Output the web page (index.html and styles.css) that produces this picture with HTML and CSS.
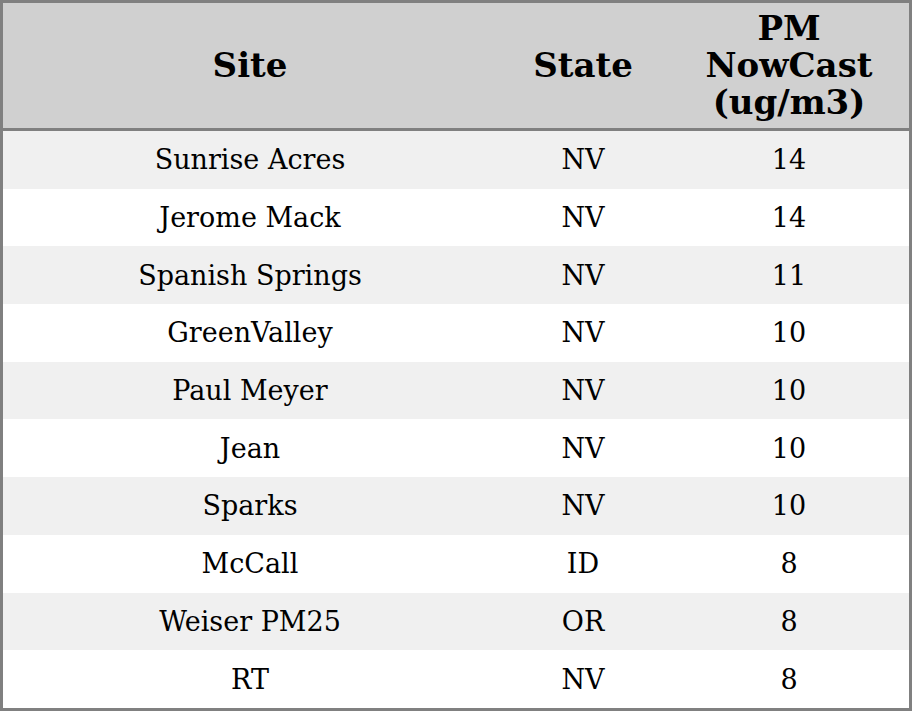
FILE: index.html
```html
<!DOCTYPE html>
<html>
<head>
<meta charset="utf-8">
<link rel="stylesheet" href="styles.css">
</head>
<body>
<table class="aq">
  <thead>
    <tr>
      <th class="c-site">Site</th>
      <th class="c-state">State</th>
      <th class="c-pm">PM<br>NowCast<br>(ug/m3)</th>
    </tr>
  </thead>
  <tbody>
    <tr><td>Sunrise Acres</td><td>NV</td><td>14</td></tr>
    <tr><td>Jerome Mack</td><td>NV</td><td>14</td></tr>
    <tr><td>Spanish Springs</td><td>NV</td><td>11</td></tr>
    <tr><td>GreenValley</td><td>NV</td><td>10</td></tr>
    <tr><td>Paul Meyer</td><td>NV</td><td>10</td></tr>
    <tr><td>Jean</td><td>NV</td><td>10</td></tr>
    <tr><td>Sparks</td><td>NV</td><td>10</td></tr>
    <tr><td>McCall</td><td>ID</td><td>8</td></tr>
    <tr><td>Weiser PM25</td><td>OR</td><td>8</td></tr>
    <tr><td>RT</td><td>NV</td><td>8</td></tr>
  </tbody>
</table>
</body>
</html>
```
FILE: styles.css
```css
html, body {
  margin: 0;
  padding: 0;
  background: #ffffff;
}
.aq {
  width: 912px;
  border-collapse: separate;
  border-spacing: 0;
  border: 3px solid #808080;
  font-family: "DejaVu Serif", serif;
  color: #000;
  table-layout: fixed;
}
.aq th {
  background: #d0d0d0;
  font-size: 34px;
  font-weight: bold;
  line-height: 37px;
  height: 125px;
  padding: 0;
  border-bottom: 3px solid #808080;
  text-align: center;
  vertical-align: middle;
}
.c-site { width: 494px; }
.c-state { width: 172px; }
.c-pm { width: 240px; }
.aq td {
  font-size: 27px;
  height: 57.7px;
  padding: 0;
  text-align: center;
  vertical-align: middle;
}
.aq tbody tr:nth-child(odd) td {
  background: #f0f0f0;
}
```
